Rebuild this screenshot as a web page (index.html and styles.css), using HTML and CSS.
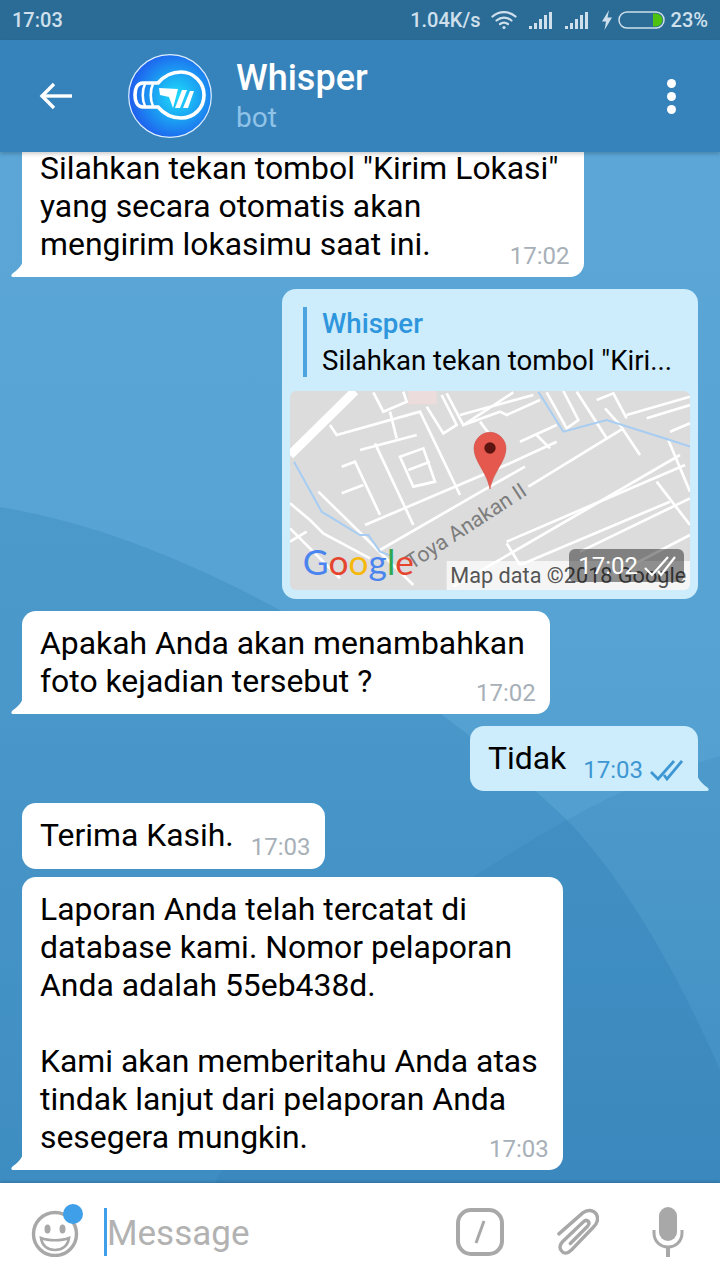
FILE: index.html
```html
<!DOCTYPE html>
<html lang="en">
<head>
    <meta charset="UTF-8">
    <meta name="viewport" content="width=device-width, initial-scale=1.0">
    <title>Whisper</title>
    <link rel="stylesheet" href="styles.css">
</head>
<body>
    <div class="status-bar">
        <span class="clock">17:03</span>
        <div class="status-icons">
            <span class="speed">1.04K/s</span>
            <svg class="wifi" width="26" height="20" viewBox="0 0 26 20" fill="none" stroke="#cfe0ec" stroke-width="2.2" stroke-linecap="round">
                <path d="M1.5 6.5C8 .6 18 .6 24.5 6.5"/>
                <path d="M5.5 10.5C10 6.6 16 6.6 20.5 10.5"/>
                <path d="M9 14C11.5 12.2 14.5 12.2 17 14"/>
                <circle cx="13" cy="17.5" r="1.6" fill="#cfe0ec" stroke="none"/>
            </svg>
            <svg class="signal" width="24" height="18" viewBox="0 0 24 18" fill="#cfe0ec">
                <rect x="0" y="15" width="3" height="3"/><rect x="5" y="12" width="3" height="6"/><rect x="10" y="8" width="3" height="10"/><rect x="15" y="4" width="3" height="14"/><rect x="20" y="1" width="3" height="17"/>
            </svg>
            <svg class="signal" width="24" height="18" viewBox="0 0 24 18" fill="#cfe0ec">
                <rect x="0" y="15" width="3" height="3"/><rect x="5" y="12" width="3" height="6"/><rect x="10" y="8" width="3" height="10"/><rect x="15" y="4" width="3" height="14"/><rect x="20" y="1" width="3" height="17"/>
            </svg>
            <svg class="bolt" width="10" height="20" viewBox="0 0 10 20" fill="#cfe0ec">
                <path d="M7 0L0 11.5H4L2.5 20L10 7.5H5.5Z"/>
            </svg>
            <svg class="battery" width="47" height="18" viewBox="0 0 47 18">
                <rect x="1" y="1" width="45" height="16" rx="8" fill="none" stroke="#cfe0ec" stroke-width="1.5"/>
                <path d="M35 2.5H38A6.5 6.5 0 0 1 38 15.5H35Z" fill="#4fc20f"/>
            </svg>
            <span class="percent">23%</span>
        </div>
    </div>

    <header class="chat-header">
        <svg class="back" width="34" height="28" viewBox="0 0 34 28" fill="none" stroke="#fff" stroke-width="3.4">
            <path d="M33 14H3"/>
            <path d="M15 2L3 14L15 26"/>
        </svg>
        <svg class="avatar" width="84" height="84" viewBox="0 0 84 84">
            <defs>
                <radialGradient id="avatarFill" cx="58%" cy="50%" r="55%">
                    <stop offset="0" stop-color="#1fdcfb"/>
                    <stop offset="0.5" stop-color="#1ba4f3"/>
                    <stop offset="1" stop-color="#1e62ee"/>
                </radialGradient>
            </defs>
            <circle cx="42" cy="42" r="41.3" fill="url(#avatarFill)" stroke="#dcefff" stroke-width="1.2"/>
            <path d="M30 29C36 22 44 18 53 18C66 18 76 29 76 41C76 54 66 64 53 64C44 64 36 60 30 53H15C9 53 7 47 7 41C7 35 9 29 15 29Z" fill="none" stroke="#fff" stroke-width="3.6"/>
            <path d="M17 30C14 36 14 46 17 52M25 30C22 36 22 46 25 52" stroke="#fff" stroke-width="2.6" fill="none"/>
            <path d="M31 34L50 35L45 54L41 43L32 41Z" fill="#fff"/>
            <path d="M54 36H59L52 54H47Z" fill="#fff"/>
            <path d="M62 37H66L60 54H55Z" fill="#fff"/>
        </svg>
        <div class="chat-title">
            <span class="chat-name">Whisper</span>
            <span class="chat-sub">bot</span>
        </div>
        <div class="menu-dots"><i></i><i></i><i></i></div>
    </header>

    <main class="messages">
        <svg class="wallpaper" viewBox="0 152 720 1031" preserveAspectRatio="none">
            <path d="M0 507C200 540 420 680 567 820C630 885 685 990 720 1070V1183H0Z" fill="#1d6ea8" fill-opacity="0.2"/>
            <path d="M760 745C680 765 620 790 567 820C530 840 500 860 473 877C370 950 280 1060 215 1183H720V745Z" fill="#1d6ea8" fill-opacity="0.12"/>
        </svg>

        <div class="bubble in">
            <p>Silahkan tekan tombol "Kirim Lokasi"<br>yang secara otomatis akan<br>mengirim lokasimu saat ini.</p>
            <span class="time">17:02</span>
        </div>

        <div class="bubble out no-tail map-bubble">
            <div class="reply">
                <span class="reply-name">Whisper</span>
                <span class="reply-text">Silahkan tekan tombol "Kiri...</span>
            </div>
            <div class="map">
                <svg class="map-img" viewBox="30 318 1200 600" width="400" height="200">
                    <rect x="30" y="318" width="1200" height="600" fill="#dcdcdc"/>
                    <rect x="385" y="318" width="85" height="40" fill="#ecdcdc"/>
                    <g fill="none" stroke="#fff" stroke-width="8">
                        <path d="M255 720L690 535L830 470"/>
                        <path d="M300 795L620 610L735 545"/>
                        <path d="M745 605L1030 430"/>
                        <path d="M520 905L1200 510"/>
                        <path d="M680 770L1215 540"/>
                        <path d="M720 840L1170 650"/>
                        <path d="M900 800L1230 640"/>
                        <path d="M1000 870L1230 750"/>
                        <path d="M30 655L90 705L130 745L270 820"/>
                        <path d="M115 620L400 900"/>
                        <path d="M30 730L180 880"/>
                        <path d="M30 770L80 740"/>
                        <path d="M680 775L720 840"/>
                        <path d="M1130 590L1230 720"/>
                        <path d="M150 420L170 450L420 380L540 630"/>
                        <path d="M240 495L410 450"/>
                        <path d="M285 475L400 720"/>
                        <path d="M185 545L225 530L300 690"/>
                        <path d="M185 625L250 600"/>
                        <path d="M360 515L430 490L465 590L400 605Z"/>
                        <path d="M385 555L450 530"/>
                        <path d="M330 380L350 460"/>
                        <path d="M280 322L310 380L380 350L370 320"/>
                        <path d="M440 365L490 445L530 420L485 330"/>
                        <path d="M500 325L550 420L700 322"/>
                        <path d="M540 390L760 330"/>
                        <path d="M550 420L660 380L680 390L780 345"/>
                        <path d="M600 410L630 450"/>
                        <path d="M720 470L830 420"/>
                        <path d="M770 450L810 490"/>
                        <path d="M800 322L860 430L895 405L850 318"/>
                        <path d="M890 320L980 460"/>
                        <path d="M950 345L1000 325L1040 400"/>
                        <path d="M975 370L1020 420L1080 510"/>
                        <path d="M1040 390L1230 335"/>
                        <path d="M1100 400L1230 360"/>
                        <path d="M1165 465L1230 620"/>
                        <path d="M1170 440L1230 415"/>
                    </g>
                    <path d="M30 510L225 318" fill="none" stroke="#fff" stroke-width="27"/>
                    <g fill="none" stroke="#a7cdf2" stroke-width="6">
                        <path d="M775 320L850 440L980 405L1160 462L1230 485"/>
                        <path d="M42 530L125 680L240 750L265 750L300 800L340 815"/>
                    </g>
                    <path d="M630 442C604 442 582 464 582 490C582 530 620 560 630 612C640 560 678 530 678 490C678 464 656 442 630 442Z" fill="#e5584e" stroke="#c9463e" stroke-width="1.5"/>
                    <circle cx="630" cy="489" r="17" fill="#5b1410"/>
                    <text class="map-road" transform="translate(395 855) rotate(-33)">Toya Anakan II</text>
                    <rect x="500" y="828" width="730" height="90" fill="#fff" fill-opacity="0.72"/>
                    <text class="map-credit" x="511" y="893">Map data ©2018 Google</text>
                    <text class="map-logo" x="68" y="870"><tspan fill="#4a84ee">G</tspan><tspan fill="#e5452f">o</tspan><tspan fill="#f6b80c">o</tspan><tspan fill="#4a84ee">g</tspan><tspan fill="#2fa84f">l</tspan><tspan fill="#e5452f">e</tspan></text>
                </svg>
                <div class="map-time">
                    <span>17:02</span>
                    <svg width="32" height="22" viewBox="0 0 32 22" fill="none" stroke="#fff" stroke-width="2.2">
                        <path d="M1 13L8 20L24 2"/>
                        <path d="M14 16L17 20L31 2"/>
                    </svg>
                </div>
            </div>
        </div>

        <div class="bubble in">
            <p>Apakah Anda akan menambahkan<br>foto kejadian tersebut ?</p>
            <span class="time">17:02</span>
        </div>

        <div class="bubble out single">
            <p>Tidak</p>
            <span class="time">17:03</span>
            <svg class="ticks" width="33" height="22" viewBox="0 0 33 22" fill="none" stroke="#3e97d3" stroke-width="2.8">
                <path d="M1 13L8 20L24 2"/>
                <path d="M14 16L17 20L32 2"/>
            </svg>
        </div>

        <div class="bubble in single no-tail tight">
            <p>Terima Kasih.</p>
            <span class="time">17:03</span>
        </div>

        <div class="bubble in">
            <p>Laporan Anda telah tercatat di<br>database kami. Nomor pelaporan<br>Anda adalah 55eb438d.<br><br>Kami akan memberitahu Anda atas<br>tindak lanjut dari pelaporan Anda<br>sesegera mungkin.</p>
            <span class="time">17:03</span>
        </div>
    </main>

    <footer class="composer">
        <div class="emoji-btn">
            <svg width="48" height="48" viewBox="0 0 48 48" fill="none" stroke="#a8a8a8" stroke-width="3.4">
                <circle cx="24" cy="25" r="21.5"/>
                <ellipse cx="16.5" cy="20" rx="3" ry="4.5" fill="#a8a8a8" stroke="none"/>
                <ellipse cx="31.5" cy="20" rx="3" ry="4.5" fill="#a8a8a8" stroke="none"/>
                <path d="M10 29C17 32 31 32 38 29C37 37 31 41 24 41C17 41 11 37 10 29Z" stroke-width="2.6"/>
            </svg>
            <i class="emoji-dot"></i>
        </div>
        <div class="input-box">
            <i class="cursor"></i>
            <span class="placeholder">Message</span>
        </div>
        <div class="composer-tools">
            <svg width="48" height="48" viewBox="0 0 48 48" fill="none" stroke="#a8a8a8">
                <rect x="2" y="2" width="44" height="44" rx="13" stroke-width="4"/>
                <path d="M28 13L20 35" stroke-width="3"/>
            </svg>
            <svg width="42" height="50" viewBox="0 0 44 50" fill="none" stroke="#a8a8a8" stroke-width="3.6" stroke-linecap="round">
                <path d="M2 27L27 5C32 1 38 2 41 6C44 11 42 16 38 20L15 44C11 48 7 48 5 45C2 42 3 38 6 35L28 14C30 12 32 13 33 14C34 16 33 18 32 19L14 37"/>
            </svg>
            <svg width="32" height="50" viewBox="0 0 32 50" fill="none">
                <rect x="7" y="0" width="18" height="34" rx="9" fill="#a8a8a8"/>
                <path d="M2 23V26C2 34 8 40 16 40C24 40 30 34 30 26V23" stroke="#a8a8a8" stroke-width="3"/>
                <path d="M16 40V50" stroke="#a8a8a8" stroke-width="4"/>
            </svg>
        </div>
    </footer>
</body>
</html>
```

FILE: styles.css
```css
* {
    box-sizing: border-box;
}

html, body {
    margin: 0;
    height: 1280px;
    overflow: hidden;
}

body {
    display: flex;
    flex-direction: column;
    font-family: Roboto, "Noto Sans", sans-serif;
    color: #000;
}

/* Status bar */
.status-bar {
    height: 40px;
    flex: none;
    display: flex;
    align-items: center;
    justify-content: space-between;
    padding: 0 12px 0 12px;
    background: #2b6c97;
    color: #cfe0ec;
    font-size: 20px;
    font-weight: 500;
}

.status-icons {
    display: flex;
    align-items: center;
}

.wifi { margin-left: 10px; }
.signal { margin-left: 12px; }
.bolt { margin-left: 13px; }
.battery { margin-left: 6px; }
.percent { margin-left: 6px; }

/* Header */
.chat-header {
    height: 112px;
    flex: none;
    display: flex;
    align-items: center;
    padding: 0 0 0 39px;
    background: #3682ba;
    box-shadow: 0 2px 4px rgba(0, 0, 0, 0.2);
    position: relative;
    z-index: 2;
}

.avatar {
    margin-left: 55px;
}

.chat-title {
    display: flex;
    flex-direction: column;
    margin-left: 24px;
    margin-top: 1px;
    flex: 1;
}

.chat-name {
    font-size: 36px;
    font-weight: 500;
    line-height: 42px;
    color: #fff;
}

.chat-sub {
    font-size: 28px;
    line-height: 38px;
    color: #90c3e8;
}

.menu-dots {
    display: flex;
    flex-direction: column;
    gap: 4px;
    margin-right: 44px;
}

.menu-dots i {
    width: 9px;
    height: 9px;
    border-radius: 50%;
    background: #fff;
}

/* Messages */
.messages {
    flex: 1;
    min-height: 0;
    position: relative;
    overflow: hidden;
    display: flex;
    flex-direction: column;
    justify-content: flex-end;
    align-items: flex-start;
    gap: 12px;
    padding: 0 22px 13px;
    background: linear-gradient(180deg, #5ba6d6 0%, #56a3d3 50%, #4795c8 100%);
}

.wallpaper {
    position: absolute;
    left: 0;
    top: 0;
    width: 100%;
    height: 100%;
}

.bubble {
    position: relative;
    flex: none;
    padding: 13px 25px 14px 18px;
    background: #fff;
    border-radius: 14px 14px 14px 0;
    font-size: 31.9px;
    line-height: 38px;
}

.bubble p {
    margin: 0;
}

.bubble::after {
    content: "";
    position: absolute;
    left: -11px;
    bottom: 0;
    width: 12px;
    height: 16px;
    background: #fff;
    clip-path: path("M12 0V16H2C0 16 0 14 1 13C6 9 10 6 12 0Z");
}

.bubble.out {
    align-self: flex-end;
    background: #cdecfc;
    border-radius: 14px 14px 0 14px;
}

.bubble.out::after {
    left: auto;
    right: -11px;
    background: #cdecfc;
    clip-path: path("M0 0V16H10C12 16 12 14 11 13C6 9 2 6 0 0Z");
}

.bubble.no-tail {
    border-radius: 14px;
}

.bubble.no-tail::after {
    display: none;
}

.bubble.tight {
    margin-bottom: -4px;
    padding-bottom: 15px;
}

.time {
    display: block;
    margin: -20px -11px -7px 0;
    height: 27px;
    text-align: right;
    font-size: 24px;
    line-height: 27px;
    color: #a7b0b8;
}

.out .time {
    color: #3e97d3;
}

.bubble.single {
    display: flex;
    align-items: flex-end;
    padding-right: 14px;
}

.bubble.single .time {
    margin: 0 0 -7px 17px;
}

.ticks {
    margin: 0 1px -4px 7px;
}

/* Map message */
.map-bubble {
    width: 416px;
    padding: 18px 8px 9px;
}

.reply {
    margin-left: 13px;
    padding-left: 15px;
    border-left: 4px solid #4ba3e0;
    display: flex;
    flex-direction: column;
    height: 70px;
    font-size: 27.6px;
    line-height: 38px;
}

.reply-name {
    color: #2e96dc;
    font-weight: 500;
    margin-top: -2px;
}

.reply-text {
    margin-top: -1px;
    white-space: nowrap;
}

.map {
    position: relative;
    margin-top: 14px;
    height: 199px;
    border-radius: 6px;
    overflow: hidden;
}

.map-img {
    display: block;
}

.map-road {
    font-family: Roboto, sans-serif;
    font-size: 64px;
    fill: #7d7d7d;
}

.map-credit {
    font-family: Roboto, sans-serif;
    font-size: 65px;
    fill: #555;
}

.map-logo {
    font-family: Lato, sans-serif;
    font-size: 106px;
    font-weight: 400;
}

.map-time {
    position: absolute;
    right: 6px;
    bottom: 8px;
    width: 115px;
    height: 33px;
    display: flex;
    align-items: center;
    justify-content: flex-end;
    gap: 6px;
    padding-right: 8px;
    background: rgba(0, 0, 0, 0.42);
    border-radius: 6px;
    color: #fff;
    font-size: 24px;
}

/* Composer */
.composer {
    height: 97px;
    flex: none;
    display: flex;
    align-items: center;
    padding: 0 36px 0 31px;
    background: #fff;
    box-shadow: 0 -1px 3px rgba(0, 0, 0, 0.2);
    position: relative;
}

.emoji-btn {
    position: relative;
    width: 48px;
    height: 48px;
    margin-top: 2px;
}

.emoji-btn svg {
    display: block;
}

.emoji-dot {
    position: absolute;
    right: -4px;
    top: -5px;
    width: 20px;
    height: 20px;
    border-radius: 50%;
    background: #3f9fe8;
}

.input-box {
    flex: 1;
    display: flex;
    align-items: center;
    margin-left: 25px;
}

.cursor {
    width: 3px;
    height: 48px;
    background: #3f9fe8;
}

.placeholder {
    font-size: 35px;
    color: #b2b2b2;
    margin-top: 3px;
}

.composer-tools {
    display: flex;
    align-items: center;
    gap: 53px;
}
```
